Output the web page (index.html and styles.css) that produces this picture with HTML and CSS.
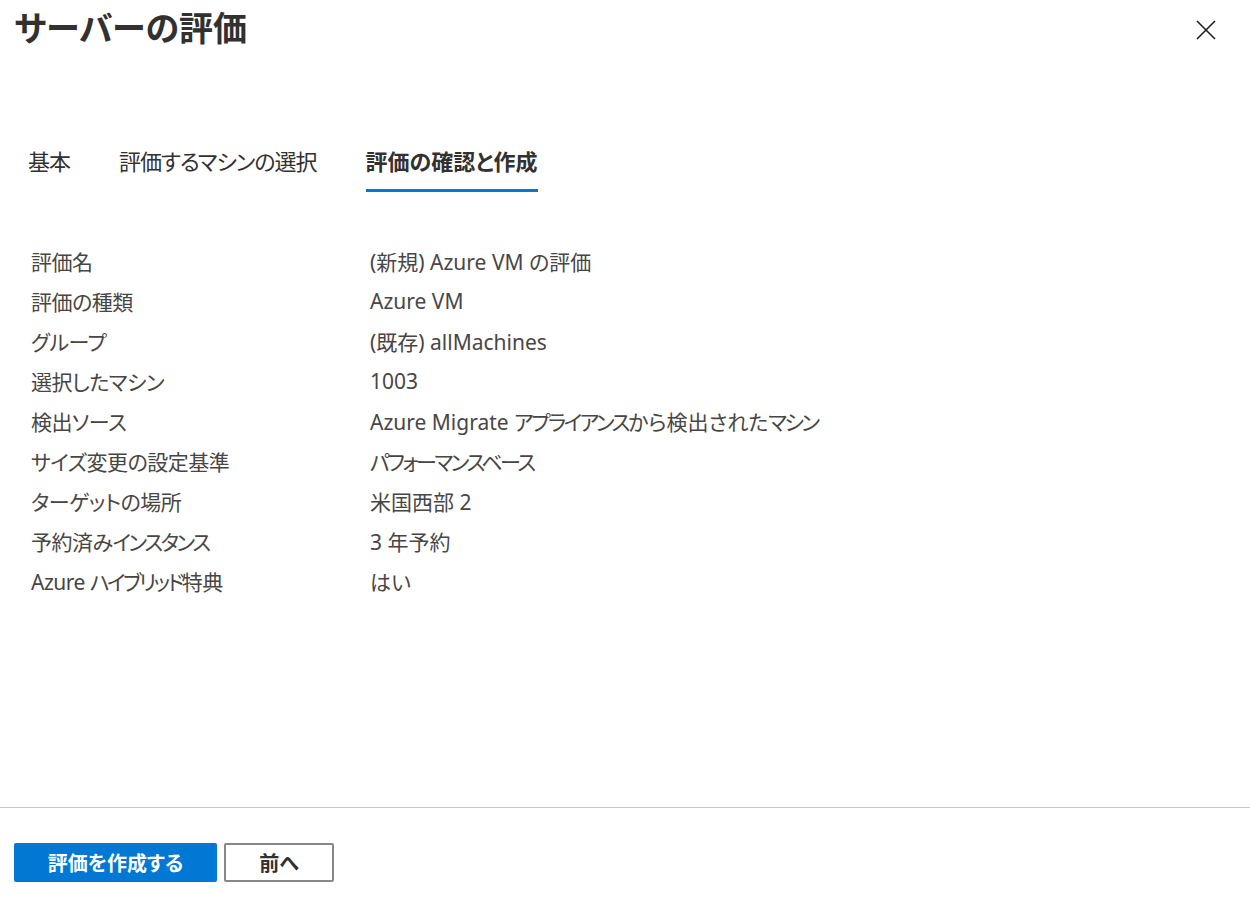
FILE: index.html
```html
<!DOCTYPE html>
<html lang="ja">
<head>
<meta charset="utf-8">
<title>サーバーの評価</title>
<link rel="stylesheet" href="styles.css">
</head>
<body>
<div class="panel">
  <header class="header">
    <h1 class="title">サーバーの評価</h1>
    <button class="close" aria-label="閉じる">
      <svg width="20" height="20" viewBox="0 0 20 20"><path d="M1 1L19 19M19 1L1 19" stroke="#201f1e" stroke-width="1.6" fill="none"/></svg>
    </button>
  </header>
  <nav class="tabs">
    <span class="tab">基本</span>
    <span class="tab">評価するマシンの選択</span>
    <span class="tab active">評価の確認と作成</span>
  </nav>
  <main class="content">
    <div class="row"><span class="label">評価名</span><span class="value">(新規) Azure VM の評価</span></div>
    <div class="row"><span class="label">評価の種類</span><span class="value">Azure VM</span></div>
    <div class="row"><span class="label">グループ</span><span class="value">(既存) allMachines</span></div>
    <div class="row"><span class="label">選択したマシン</span><span class="value">1003</span></div>
    <div class="row"><span class="label">検出ソース</span><span class="value">Azure Migrate <span class="kana">アプライアンス</span>から検出された<span class="kana">マシン</span></span></div>
    <div class="row"><span class="label">サイズ変更の設定基準</span><span class="value"><span class="kana">パフォーマンスベース</span></span></div>
    <div class="row"><span class="label">ターゲットの場所</span><span class="value">米国西部 2</span></div>
    <div class="row"><span class="label">予約済み<span class="kana">インスタンス</span></span><span class="value">3 年予約</span></div>
    <div class="row"><span class="label">Azure <span class="kana">ハイブリッド</span>特典</span><span class="value">はい</span></div>
  </main>
  <footer class="footer">
    <button class="btn primary">評価を作成する</button>
    <button class="btn secondary">前へ</button>
  </footer>
</div>
</body>
</html>
```
FILE: styles.css
```css
html, body {
  margin: 0;
  padding: 0;
  background: #ffffff;
}
body {
  font-family: "Noto Sans", "Noto Sans CJK JP", sans-serif;
  font-feature-settings: "palt";
  color: #323130;
}
.panel {
  height: 903px;
  display: flex;
  flex-direction: column;
}
.header {
  display: flex;
  justify-content: space-between;
  align-items: flex-start;
  padding: 0 34px 0 14px;
}
.title {
  margin: 0;
  font-size: 34px;
  line-height: 56px;
  font-weight: 700;
  color: #323130;
  letter-spacing: 0;
}
.close {
  border: none;
  background: none;
  padding: 0;
  margin-top: 20px;
  width: 20px;
  height: 20px;
  display: flex;
}
.tabs {
  display: flex;
  gap: 49px;
  padding: 89px 0 0 28px;
}
.tab {
  font-size: 22px;
  line-height: 32px;
  padding-bottom: 12px;
  border-bottom: 3px solid transparent;
  color: #323130;
  letter-spacing: -1px;
}
.tab.active {
  font-weight: 700;
  letter-spacing: 0;
  border-bottom-color: #0078d4;
}
.content {
  flex: 1;
  padding: 49px 0 0 31px;
}
.row {
  display: flex;
  height: 40px;
  align-items: center;
  font-size: 21px;
  color: #484644;
}
.label {
  width: 339px;
  flex: none;
  letter-spacing: -0.5px;
}
.kana {
  letter-spacing: -2.5px;
}
.footer {
  border-top: 1px solid #c8c6c4;
  height: 96px;
  padding: 35px 0 0 14px;
  box-sizing: border-box;
  display: flex;
  gap: 7px;
  align-items: flex-start;
}
.btn {
  font-family: "Noto Sans", "Noto Sans CJK JP", sans-serif;
  font-feature-settings: "palt";
  font-size: 20px;
  font-weight: 700;
  height: 39px;
  border-radius: 2px;
  cursor: pointer;
}
.primary {
  width: 203px;
  background: #0078d4;
  color: #ffffff;
  border: none;
}
.secondary {
  width: 110px;
  background: #ffffff;
  color: #323130;
  border: 2px solid #8a8886;
}
```
